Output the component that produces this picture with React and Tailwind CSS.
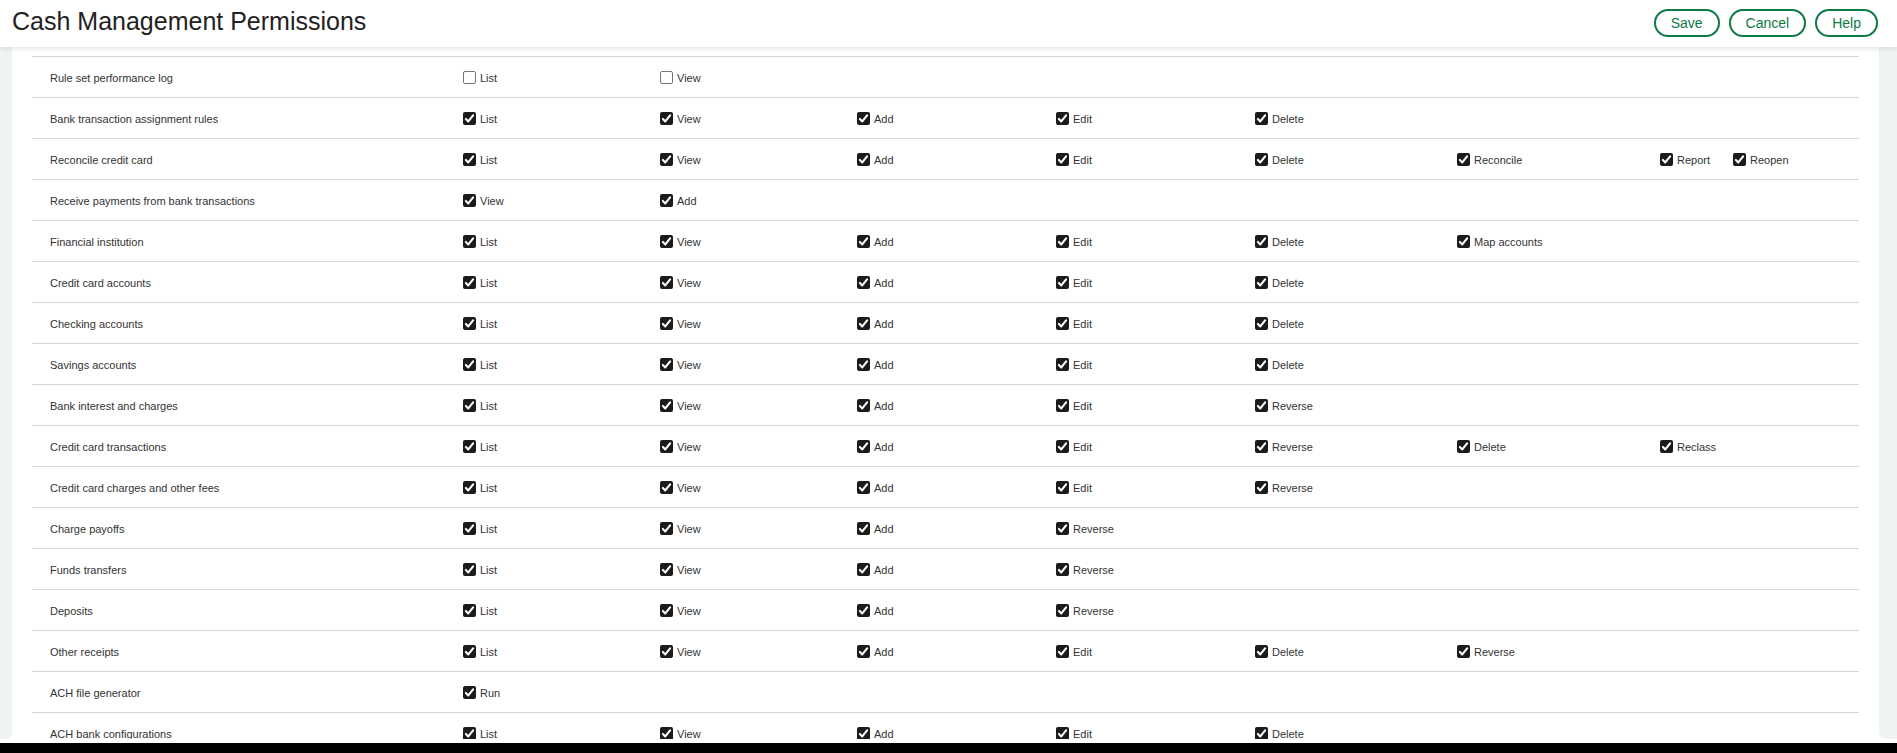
import React from "react";

const rows = [
  ["Rule set performance log", [["List", false], ["View", false]]],
  ["Bank transaction assignment rules", ["List", "View", "Add", "Edit", "Delete"]],
  ["Reconcile credit card", ["List", "View", "Add", "Edit", "Delete", "Reconcile", ["Report", "Reopen"]]],
  ["Receive payments from bank transactions", ["View", "Add"]],
  ["Financial institution", ["List", "View", "Add", "Edit", "Delete", "Map accounts"]],
  ["Credit card accounts", ["List", "View", "Add", "Edit", "Delete"]],
  ["Checking accounts", ["List", "View", "Add", "Edit", "Delete"]],
  ["Savings accounts", ["List", "View", "Add", "Edit", "Delete"]],
  ["Bank interest and charges", ["List", "View", "Add", "Edit", "Reverse"]],
  ["Credit card transactions", ["List", "View", "Add", "Edit", "Reverse", "Delete", "Reclass"]],
  ["Credit card charges and other fees", ["List", "View", "Add", "Edit", "Reverse"]],
  ["Charge payoffs", ["List", "View", "Add", "Reverse"]],
  ["Funds transfers", ["List", "View", "Add", "Reverse"]],
  ["Deposits", ["List", "View", "Add", "Reverse"]],
  ["Other receipts", ["List", "View", "Add", "Edit", "Delete", "Reverse"]],
  ["ACH file generator", ["Run"]],
  ["ACH bank configurations", ["List", "View", "Add", "Edit", "Delete"]],
];

function Box({ checked }) {
  if (!checked) {
    return (
      <span className="block w-[13px] h-[13px] shrink-0 rounded-[2px] border border-[#767676] bg-white" />
    );
  }
  return (
    <span className="flex w-[13px] h-[13px] shrink-0 items-center justify-center rounded-[2px] bg-[#1b1b1b]">
      <svg width="13" height="13" viewBox="0 0 13 13">
        <path d="M2.9 6.9 L5.3 9.4 L10.1 3.4" fill="none" stroke="#fff" strokeWidth="2.1" strokeLinecap="round" strokeLinejoin="round" />
      </svg>
    </span>
  );
}

function Item({ label, checked = true }) {
  return (
    <span className="flex items-center gap-[4px]">
      <Box checked={checked} />
      <span className="pt-[2px]">{label}</span>
    </span>
  );
}

function Cell({ item }) {
  if (Array.isArray(item) && typeof item[1] === "boolean") {
    return <Item label={item[0]} checked={item[1]} />;
  }
  if (Array.isArray(item)) {
    return (
      <div className="flex items-center gap-[23px]">
        {item.map((l) => (
          <Item key={l} label={l} />
        ))}
      </div>
    );
  }
  return <Item label={item} />;
}

function Button({ children }) {
  return (
    <button className="h-[28px] rounded-full border-2 border-[#0c7a44] px-[15px] text-[14px] leading-none text-[#0c7a44] bg-white">
      {children}
    </button>
  );
}

export default function App() {
  return (
    <div className="w-[1897px] h-[753px] overflow-hidden bg-white flex flex-col text-[#333]" style={{ fontFamily: '"Liberation Sans", Arial, sans-serif' }}>
      <header className="relative z-10 h-[47px] shrink-0 flex items-center justify-between pl-[12px] pr-[19px] bg-white shadow-[0_2px_5px_rgba(0,0,0,0.10)]">
        <h1 className="text-[25px] leading-none text-[#222] mt-[-5px]">Cash Management Permissions</h1>
        <div className="flex items-center gap-[9px] mt-[-1px]">
          <Button>Save</Button>
          <Button>Cancel</Button>
          <Button>Help</Button>
        </div>
      </header>
      <div className="h-[692px] shrink-0 flex overflow-hidden">
        <div className="w-[12px] shrink-0 bg-[#f0f3f4] rounded-br-[6px]" />
        <div className="flex-1 overflow-hidden px-[20px] pt-[9px]">
          {rows.map(([label, items]) => (
            <div
              key={label}
              className="grid grid-cols-[431px_197px_197px_199px_199px_202px_203px_1fr] h-[41px] items-center border-t border-[#d0d7db] text-[11px]"
            >
              <div className="pl-[18px] pt-[2px]">{label}</div>
              {items.map((it, i) => (
                <div key={i}>
                  <Cell item={it} />
                </div>
              ))}
            </div>
          ))}
        </div>
        <div className="w-[18px] shrink-0 bg-[#f0f3f4] rounded-bl-[6px]" />
      </div>
      <div className="h-[4px] shrink-0 bg-white" />
      <div className="h-[10px] shrink-0 bg-black" />
    </div>
  );
}
